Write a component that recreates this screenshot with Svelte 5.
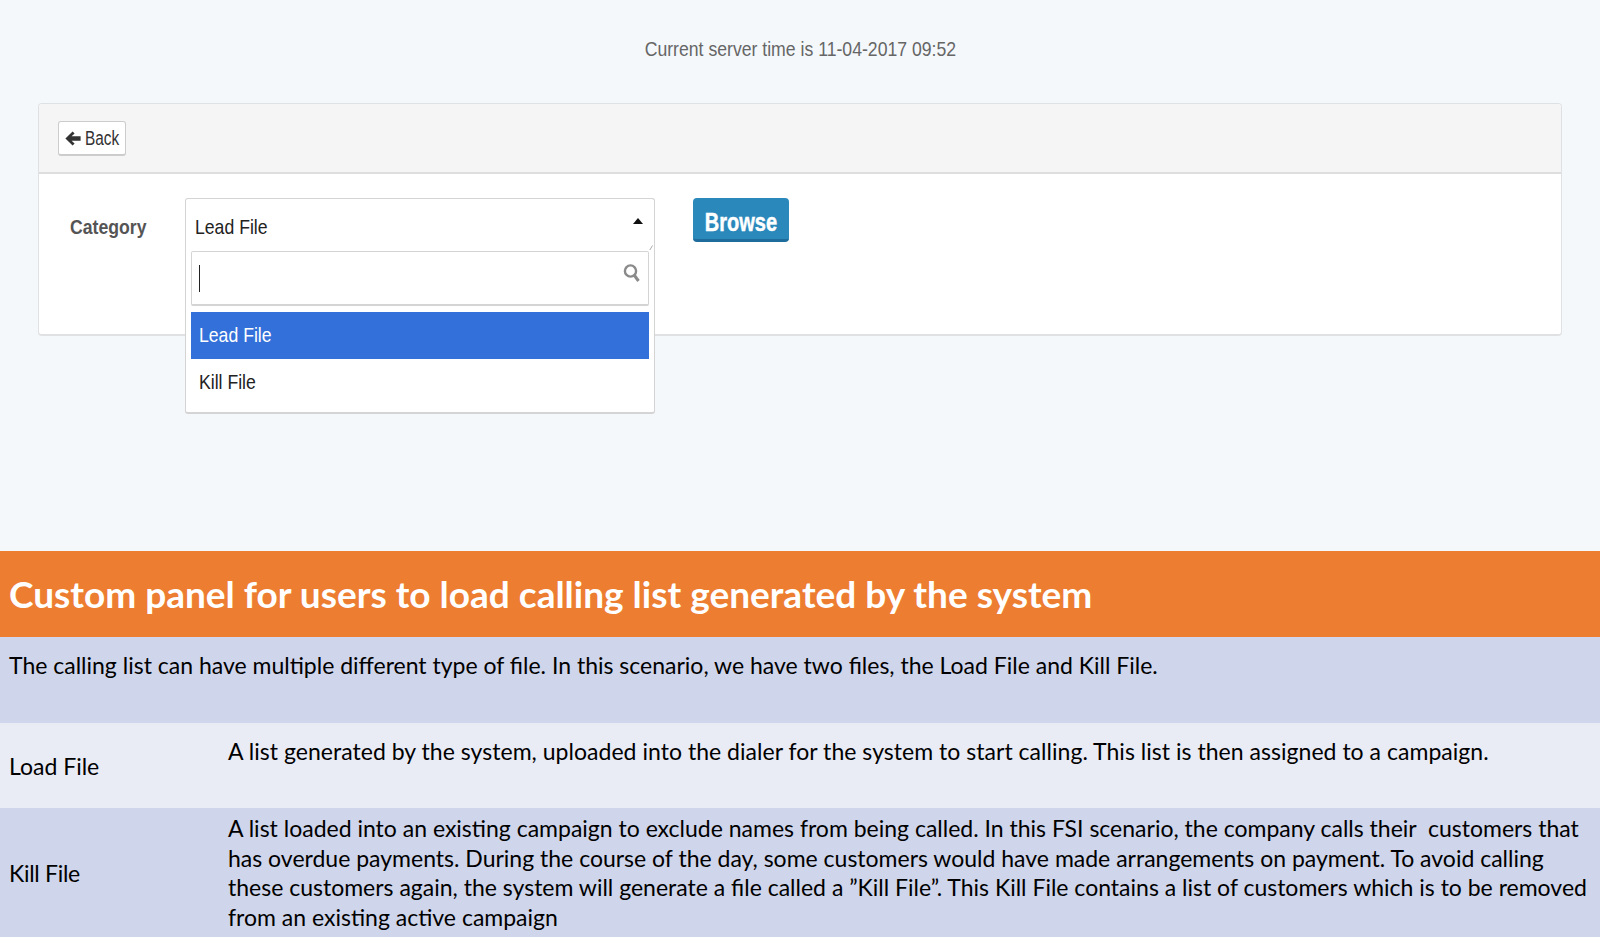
<script>
  const killLines = [
    'A list loaded into an existing campaign to exclude names from being called. In this FSI scenario, the company calls their  customers that',
    'has overdue payments. During the course of the day, some customers would have made arrangements on payment. To avoid calling',
    'these customers again, the system will generate a file called a ”Kill File”. This Kill File contains a list of customers which is to be removed',
    'from an existing active campaign'
  ];
</script>

<div class="page">
  <section class="app">
    <p class="server-time"><span class="squeeze mid time">Current server time is 11-04-2017 09:52</span></p>

    <div class="panel">
      <div class="panel-head">
        <button class="back">
          <svg width="16" height="15" viewBox="0 0 16 15"><path d="M7.6 0.4 L0.4 7.5 L7.6 14.6 L9.6 12.6 L6.6 9.7 H15.6 V5.3 H6.6 L9.6 2.4 Z" fill="#333" /></svg>
          <span class="squeeze tight">Back</span>
        </button>
      </div>
      <div class="panel-body">
        <span class="label"><span class="squeeze">Category</span></span>
        <div class="select">
          <div class="select-value">
            <span class="squeeze">Lead File</span>
            <i class="caret"></i>
          </div>
          <svg class="grip" width="5" height="6" viewBox="0 0 5 6"><path d="M0.5 5.5 L3.5 0.5" stroke="#aaa" /></svg>
          <div class="dropdown">
            <div class="search">
              <i class="cursor"></i>
              <svg width="17" height="18" viewBox="0 0 17 18" fill="none" stroke="#8a8a8a" stroke-width="2.4"><circle cx="7.5" cy="7" r="5.6" /><path d="M11.5 11.5 L15.5 17" stroke-width="3" /></svg>
            </div>
            <div class="option active"><span class="squeeze">Lead File</span></div>
            <div class="option"><span class="squeeze">Kill File</span></div>
          </div>
        </div>
        <button class="browse"><span class="squeeze mid tight">Browse</span></button>
      </div>
    </div>
  </section>

  <section class="notes">
    <h1>Custom panel for users to load calling list generated by the system</h1>
    <div class="row intro">The calling list can have multiple different type of file. In this scenario, we have two files, the Load File and Kill File.</div>
    <div class="row light">
      <span class="name">Load File</span>
      <div class="line top">A list generated by the system, uploaded into the dialer for the system to start calling. This list is then assigned to a campaign.</div>
    </div>
    <div class="row kill">
      <span class="name short">Kill File</span>
      <div class="desc">
        {#each killLines as line}
          <div class="line">{line}</div>
        {/each}
      </div>
    </div>
  </section>
</div>

<style>
  :global(body) {
    background: #fff;
  }

  .page {
    font-family: "Liberation Sans", sans-serif;
  }

  /* the reference is a horizontally squashed screenshot */
  .squeeze {
    display: inline-block;
    white-space: pre;
    transform: scaleX(0.84);
    transform-origin: left center;
  }

  .squeeze.mid {
    transform-origin: center;
  }

  .squeeze.time {
    transform: scaleX(0.84);
  }

  .squeeze.tight {
    transform: scaleX(0.77);
  }

  .app {
    height: 551px;
    background: #f4f8fb;
    box-sizing: border-box;
    padding: 38px 38px 0;
  }

  .server-time {
    margin: 0 0 42px;
    height: 23px;
    line-height: 21px;
    text-align: center;
    font-size: 21px;
    color: #666;
  }

  .panel {
    height: 233px;
    box-sizing: border-box;
    background: #fff;
    border: 1px solid #dfe1e3;
    border-bottom-width: 2px;
    border-radius: 4px;
  }

  .panel-head {
    height: 70px;
    box-sizing: border-box;
    background: #f5f5f5;
    border-bottom: 2px solid #dedede;
    padding: 17px 19px;
    border-radius: 4px 4px 0 0;
  }

  .back {
    display: flex;
    align-items: center;
    gap: 4px;
    height: 35px;
    width: 68px;
    padding: 0 6px;
    background: #fff;
    border: 1px solid #ccc;
    border-bottom-width: 2px;
    border-radius: 3px;
    font: 20px "Liberation Sans", sans-serif;
    color: #333;
  }

  .back svg {
    flex-shrink: 0;
  }

  .panel-body {
    display: flex;
    align-items: flex-start;
    padding: 24px 31px;
  }

  .label {
    width: 115px;
    line-height: 58px;
    font-size: 21px;
    font-weight: 700;
    color: #555;
  }

  .select {
    position: relative;
    width: 470px;
    height: 52px;
    margin-right: 38px;
  }

  .select-value {
    display: flex;
    justify-content: space-between;
    height: 100%;
    box-sizing: border-box;
    background: #fff;
    border: 1px solid #d4d4d4;
    border-bottom: 0;
    border-radius: 3px 3px 0 0;
    padding: 0 11px 0 9px;
    line-height: 55px;
    font-size: 21px;
    color: #222;
  }

  .caret {
    width: 0;
    height: 0;
    margin-top: 19px;
    border: 5px solid transparent;
    border-top: 0;
    border-bottom: 6px solid #111;
  }

  .grip {
    position: absolute;
    right: 1px;
    top: 47px;
  }

  .dropdown {
    position: absolute;
    top: 52px;
    left: 0;
    right: 0;
    height: 164px;
    box-sizing: border-box;
    padding: 1px 5px 0;
    background: #fff;
    border: 1px solid #d4d4d4;
    border-top: 0;
    border-bottom-width: 2px;
    border-radius: 0 0 3px 3px;
  }

  .search {
    display: flex;
    justify-content: space-between;
    height: 55px;
    box-sizing: border-box;
    border: 1px solid #d4d4d4;
    border-bottom-width: 2px;
    border-radius: 2px;
    padding: 12px 8px 12px 7px;
  }

  .cursor {
    width: 1px;
    height: 27px;
    background: #222;
    margin-top: 1px;
  }

  .option {
    height: 47px;
    line-height: 45px;
    padding: 0 8px;
    font-size: 21px;
    color: #222;
  }

  .option.active {
    margin-top: 6px;
    background: #3470d9;
    color: #fff;
  }

  .browse {
    width: 96px;
    height: 44px;
    padding: 8px 0 0;
    background: #2a88bb;
    border: 0;
    border-bottom: 3px solid #1d6c9c;
    border-radius: 4px;
    color: #fff;
    font: 700 26px "Liberation Sans", sans-serif;
    -webkit-text-stroke: 0.5px #fff;
  }

  .notes {
    font-family: Lato, sans-serif;
    font-size: 23px;
    color: #000;
  }

  h1 {
    margin: 0;
    height: 86px;
    box-sizing: border-box;
    background: #ed7d31;
    padding: 0 9px;
    line-height: 86px;
    font-size: 37px;
    font-weight: 700;
    color: #fff;
    white-space: pre;
  }

  .row {
    padding-left: 9px;
  }

  .intro {
    height: 86px;
    background: #cfd5ea;
    line-height: 57px;
    white-space: pre;
  }

  .light {
    display: flex;
    height: 85px;
    background: #e9ebf5;
  }

  .kill {
    display: flex;
    height: 129px;
    background: #cfd5ea;
  }

  .name {
    display: flex;
    align-items: center;
    width: 219px;
    white-space: pre;
  }

  .name.short {
    letter-spacing: -0.3px;
  }

  .kill .desc {
    padding-top: 6px;
  }

  .line {
    height: 29.6px;
    line-height: 29.6px;
    white-space: pre;
  }

  .line.top {
    line-height: 57px;
    letter-spacing: 0.03px;
  }
</style>
